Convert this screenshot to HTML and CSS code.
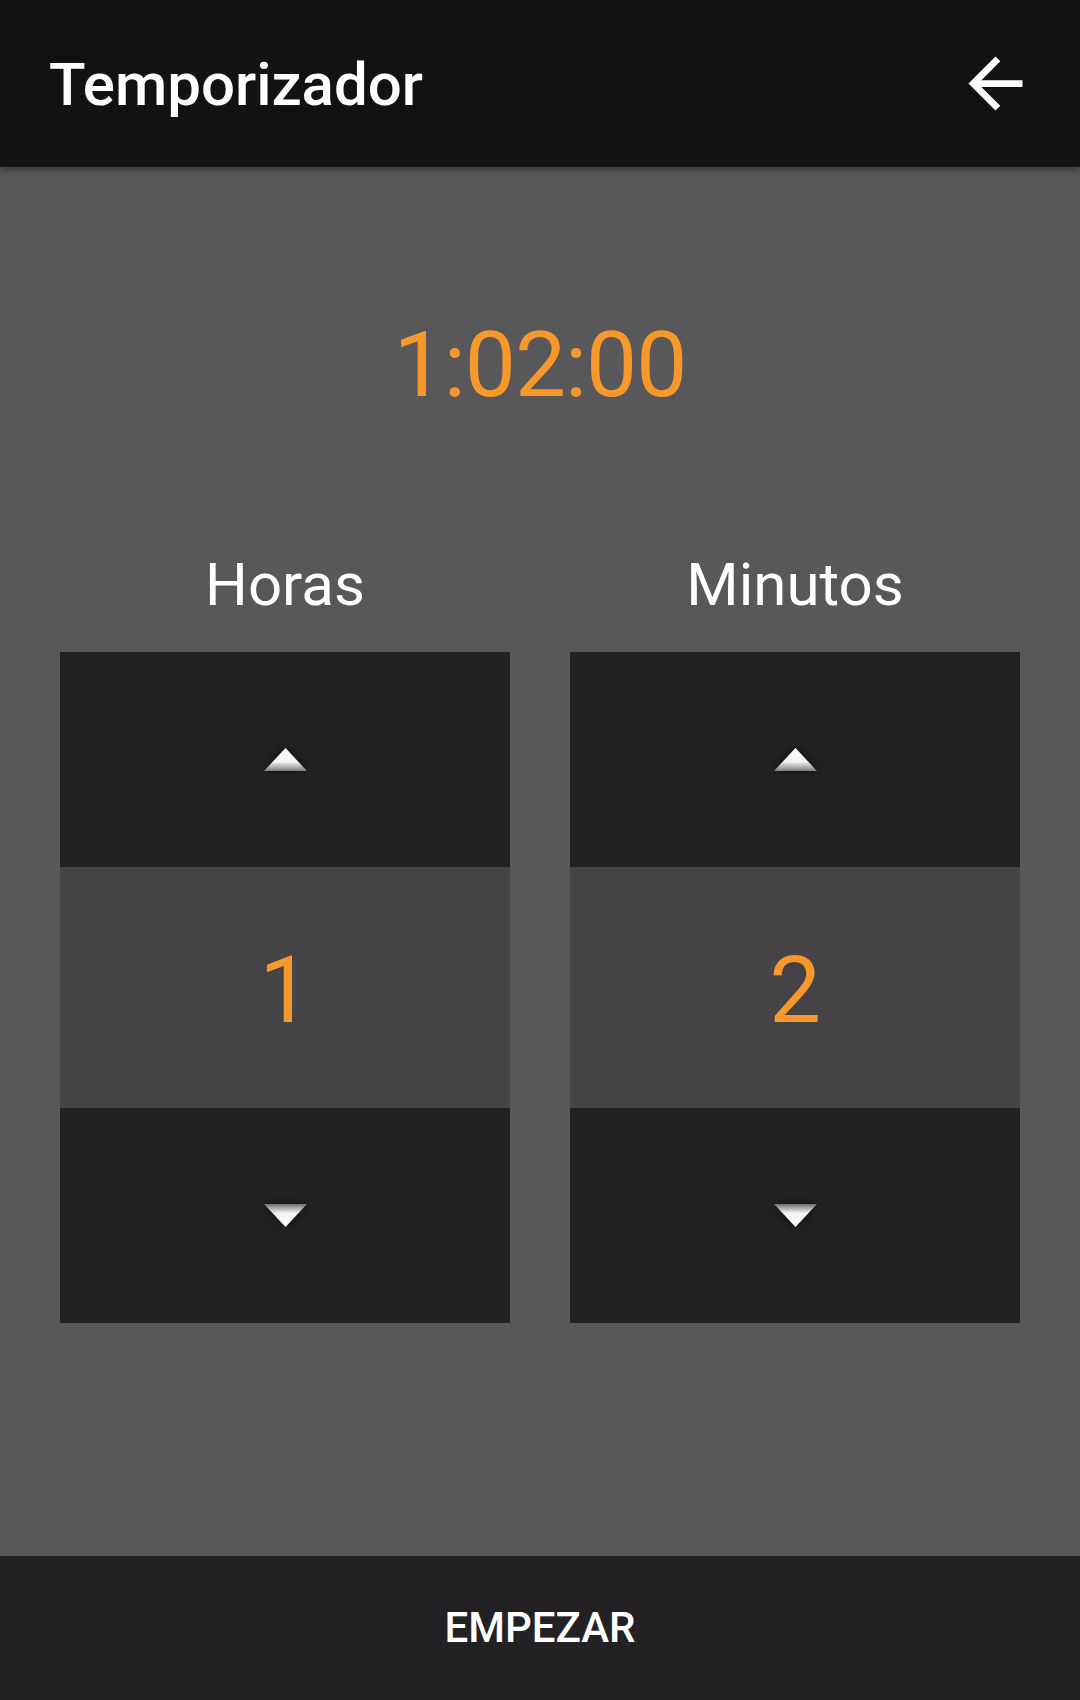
FILE: index.html
```html
<!DOCTYPE html>
<html lang="es">
<head>
<meta charset="utf-8">
<title>Temporizador</title>
<link rel="stylesheet" href="styles.css">
</head>
<body>
<div class="app">
  <header class="topbar">
    <h1 class="title">Temporizador</h1>
    <button class="back" aria-label="Atrás">
      <svg viewBox="0 0 24 24" width="81" height="81"><path fill="#ffffff" d="M20 11H7.83l5.59-5.59L12 4l-8 8 8 8 1.41-1.41L7.83 13H20v-2z"/></svg>
    </button>
  </header>
  <main class="content">
    <div class="clock">1:02:00</div>
    <div class="pickers">
      <section class="picker">
        <div class="label">Horas</div>
        <div class="spinner">
          <div class="step">
            <svg class="tri" viewBox="0 0 45 25" width="45" height="25">
              <defs>
                <linearGradient id="gu1" x1="0" y1="0" x2="0" y2="1">
                  <stop offset="0" stop-color="#ffffff"/>
                  <stop offset="0.6" stop-color="#f4f4f4"/>
                  <stop offset="1" stop-color="#7a797c"/>
                </linearGradient>
              </defs>
              <polygon points="22.5,1 44,24 1,24" fill="url(#gu1)"/>
            </svg>
          </div>
          <div class="value">1</div>
          <div class="step">
            <svg class="tri" viewBox="0 0 45 25" width="45" height="25">
              <defs>
                <linearGradient id="gd1" x1="0" y1="0" x2="0" y2="1">
                  <stop offset="0" stop-color="#6f6e71"/>
                  <stop offset="0.4" stop-color="#f4f4f4"/>
                  <stop offset="1" stop-color="#ffffff"/>
                </linearGradient>
              </defs>
              <polygon points="1,1 44,1 22.5,24" fill="url(#gd1)"/>
            </svg>
          </div>
        </div>
      </section>
      <section class="picker">
        <div class="label">Minutos</div>
        <div class="spinner">
          <div class="step">
            <svg class="tri" viewBox="0 0 45 25" width="45" height="25">
              <defs>
                <linearGradient id="gu2" x1="0" y1="0" x2="0" y2="1">
                  <stop offset="0" stop-color="#ffffff"/>
                  <stop offset="0.6" stop-color="#f4f4f4"/>
                  <stop offset="1" stop-color="#7a797c"/>
                </linearGradient>
              </defs>
              <polygon points="22.5,1 44,24 1,24" fill="url(#gu2)"/>
            </svg>
          </div>
          <div class="value">2</div>
          <div class="step">
            <svg class="tri" viewBox="0 0 45 25" width="45" height="25">
              <defs>
                <linearGradient id="gd2" x1="0" y1="0" x2="0" y2="1">
                  <stop offset="0" stop-color="#6f6e71"/>
                  <stop offset="0.4" stop-color="#f4f4f4"/>
                  <stop offset="1" stop-color="#ffffff"/>
                </linearGradient>
              </defs>
              <polygon points="1,1 44,1 22.5,24" fill="url(#gd2)"/>
            </svg>
          </div>
        </div>
      </section>
    </div>
  </main>
  <footer class="footer">
    <button class="start">EMPEZAR</button>
  </footer>
</div>
</body>
</html>
```

FILE: styles.css
```css
* { box-sizing: border-box; }
html, body { margin: 0; padding: 0; }
body {
  font-family: Roboto, "Noto Sans", "Liberation Sans", sans-serif;
  background: #58575a;
  color: #ffffff;
}
.app {
  width: 1080px;
  height: 1700px;
  display: flex;
  flex-direction: column;
  overflow: hidden;
}
.topbar {
  height: 167px;
  flex: none;
  background: #131114;
  display: flex;
  align-items: flex-start;
  justify-content: space-between;
  padding: 0 44px 0 49px;
  box-shadow: 0 3px 6px rgba(0,0,0,0.35);
  position: relative;
  z-index: 1;
}
.title {
  margin: 0;
  padding-top: 55px;
  font-size: 60px;
  line-height: 60px;
  font-weight: 500;
  color: #ffffff;
}
.back {
  margin-top: 43px;
  background: none;
  border: 0;
  padding: 0;
  width: 81px;
  height: 81px;
  display: flex;
}
.content {
  flex: 1;
  display: flex;
  flex-direction: column;
  align-items: center;
  padding-top: 152px;
}
.clock {
  font-size: 91px;
  line-height: 93px;
  letter-spacing: -1px;
  color: #f7982c;
  font-weight: 400;
}
.pickers {
  margin-top: 142px;
  display: flex;
  gap: 60px;
}
.picker {
  width: 450px;
  display: flex;
  flex-direction: column;
  align-items: center;
}
.label {
  font-size: 60px;
  line-height: 62px;
  height: 62px;
  margin-bottom: 36px;
  color: #ffffff;
}
.spinner {
  width: 450px;
  display: flex;
  flex-direction: column;
}
.step {
  height: 215px;
  background: #232124;
  display: flex;
  align-items: center;
  justify-content: center;
}
.tri {
  filter: drop-shadow(0 0 4px rgba(0,0,0,0.6));
}
.value {
  height: 241px;
  background: #454346;
  display: flex;
  align-items: center;
  justify-content: center;
  padding-top: 6px;
  font-size: 92px;
  line-height: 92px;
  color: #f7982c;
}
.footer {
  height: 144px;
  flex: none;
  background: #232124;
  display: flex;
  align-items: center;
  justify-content: center;
}
.start {
  background: none;
  border: 0;
  padding: 0;
  color: #ffffff;
  font-family: Roboto, "Noto Sans", "Liberation Sans", sans-serif;
  font-size: 42px;
  font-weight: 500;
  line-height: 42px;
}
```
